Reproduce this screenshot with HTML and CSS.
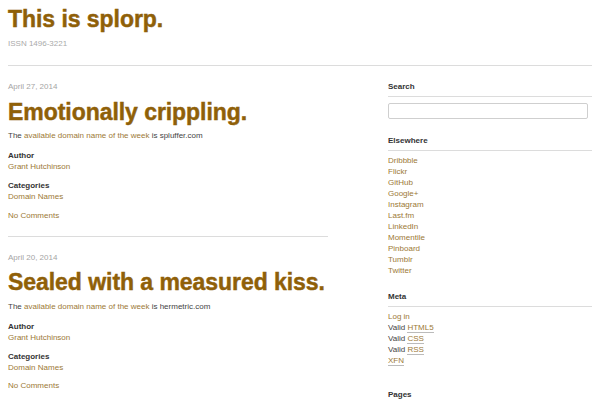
FILE: index.html
```html
<!DOCTYPE html>
<html lang="en">
<head>
<meta charset="utf-8">
<title>This is splorp.</title>
<link rel="stylesheet" href="styles.css">
</head>
<body>
<div class="page">
  <header class="masthead">
    <h1 class="site-title">This is splorp.</h1>
    <p class="issn">ISSN 1496-3221</p>
  </header>
  <div class="layout">
    <main class="posts">
      <article class="post">
        <p class="date">April 27, 2014</p>
        <h2 class="post-title">Emotionally crippling.</h2>
        <p class="excerpt">The <a href="#">available domain name of the week</a> is spluffer.com</p>
        <p class="label">Author</p>
        <p class="value"><a href="#">Grant Hutchinson</a></p>
        <p class="label cat">Categories</p>
        <p class="value"><a href="#">Domain Names</a></p>
        <p class="comments"><a href="#">No Comments</a></p>
      </article>
      <article class="post">
        <p class="date">April 20, 2014</p>
        <h2 class="post-title">Sealed with a measured kiss.</h2>
        <p class="excerpt">The <a href="#">available domain name of the week</a> is hermetric.com</p>
        <p class="label">Author</p>
        <p class="value"><a href="#">Grant Hutchinson</a></p>
        <p class="label cat">Categories</p>
        <p class="value"><a href="#">Domain Names</a></p>
        <p class="comments"><a href="#">No Comments</a></p>
      </article>
    </main>
    <aside class="sidebar">
      <section class="widget">
        <h3 class="widget-title">Search</h3>
        <input class="search" type="text" aria-label="Search">
      </section>
      <section class="widget">
        <h3 class="widget-title">Elsewhere</h3>
        <ul class="links">
          <li><a href="#">Dribbble</a></li>
          <li><a href="#">Flickr</a></li>
          <li><a href="#">GitHub</a></li>
          <li><a href="#">Google+</a></li>
          <li><a href="#">Instagram</a></li>
          <li><a href="#">Last.fm</a></li>
          <li><a href="#">LinkedIn</a></li>
          <li><a href="#">Momentile</a></li>
          <li><a href="#">Pinboard</a></li>
          <li><a href="#">Tumblr</a></li>
          <li><a href="#">Twitter</a></li>
        </ul>
      </section>
      <section class="widget">
        <h3 class="widget-title">Meta</h3>
        <ul class="links">
          <li><a href="#">Log in</a></li>
          <li>Valid <a class="abbr" href="#">HTML5</a></li>
          <li>Valid <a class="abbr" href="#">CSS</a></li>
          <li>Valid <a class="abbr" href="#">RSS</a></li>
          <li><a class="abbr" href="#">XFN</a></li>
        </ul>
      </section>
      <section class="widget pages">
        <h3 class="widget-title">Pages</h3>
      </section>
    </aside>
  </div>
</div>
</body>
</html>
```
FILE: styles.css
```css
html, body {
  margin: 0;
  padding: 0;
  background: #fff;
}
body {
  font-family: "Liberation Sans", Arial, sans-serif;
  color: #444;
  font-size: 8px;
  line-height: 11px;
  overflow: hidden;
  height: 400px;
}
a {
  color: #9c7936;
  text-decoration: none;
}
p, h1, h2, h3, ul {
  margin: 0;
  padding: 0;
}
.page {
  padding: 0 8px;
}
.masthead {
  padding-top: 5px;
  border-bottom: 1px solid #dcdcdc;
  padding-bottom: 16px;
}
.site-title,
.post-title {
  font-size: 23px;
  line-height: 28px;
  font-weight: 700;
  color: #8f6008;
  letter-spacing: -0.05px;
  -webkit-text-stroke: 0.45px #8f6008;
}
.issn {
  margin-top: 4.5px;
  color: #aaa;
}
.layout {
  display: flex;
  gap: 60px;
}
.posts {
  width: 320px;
  flex: none;
}
.post {
  padding-top: 15.5px;
  padding-bottom: 15.5px;
  border-bottom: 1px solid #dcdcdc;
}
.post + .post {
  padding-top: 14.5px;
}
.date {
  color: #a5a5a5;
}
.post-title {
  margin-top: 5.5px;
  white-space: nowrap;
}
.excerpt {
  margin-top: 4.5px;
}
.label {
  margin-top: 9px;
  font-weight: bold;
  color: #333;
}
.label.cat {
  margin-top: 8px;
}
.comments {
  margin-top: 7.5px;
}
.sidebar {
  flex: 1;
  padding-top: 15.5px;
}
.widget + .widget {
  margin-top: 15.5px;
}
.widget-title {
  font-size: 8px;
  line-height: 11px;
  font-weight: bold;
  color: #333;
  padding-bottom: 4px;
  border-bottom: 1px solid #dcdcdc;
}
.search {
  display: block;
  box-sizing: border-box;
  margin-top: 6px;
  width: 200px;
  height: 16px;
  border: 1px solid #cfcfcf;
  border-radius: 2px;
  padding: 0 4px;
  font: inherit;
  background: #fff;
}
.links {
  list-style: none;
  margin-top: 4px;
}
.abbr {
  border-bottom: 1px solid #bbb;
}
.widget.pages {
  margin-top: 23px;
}
```
